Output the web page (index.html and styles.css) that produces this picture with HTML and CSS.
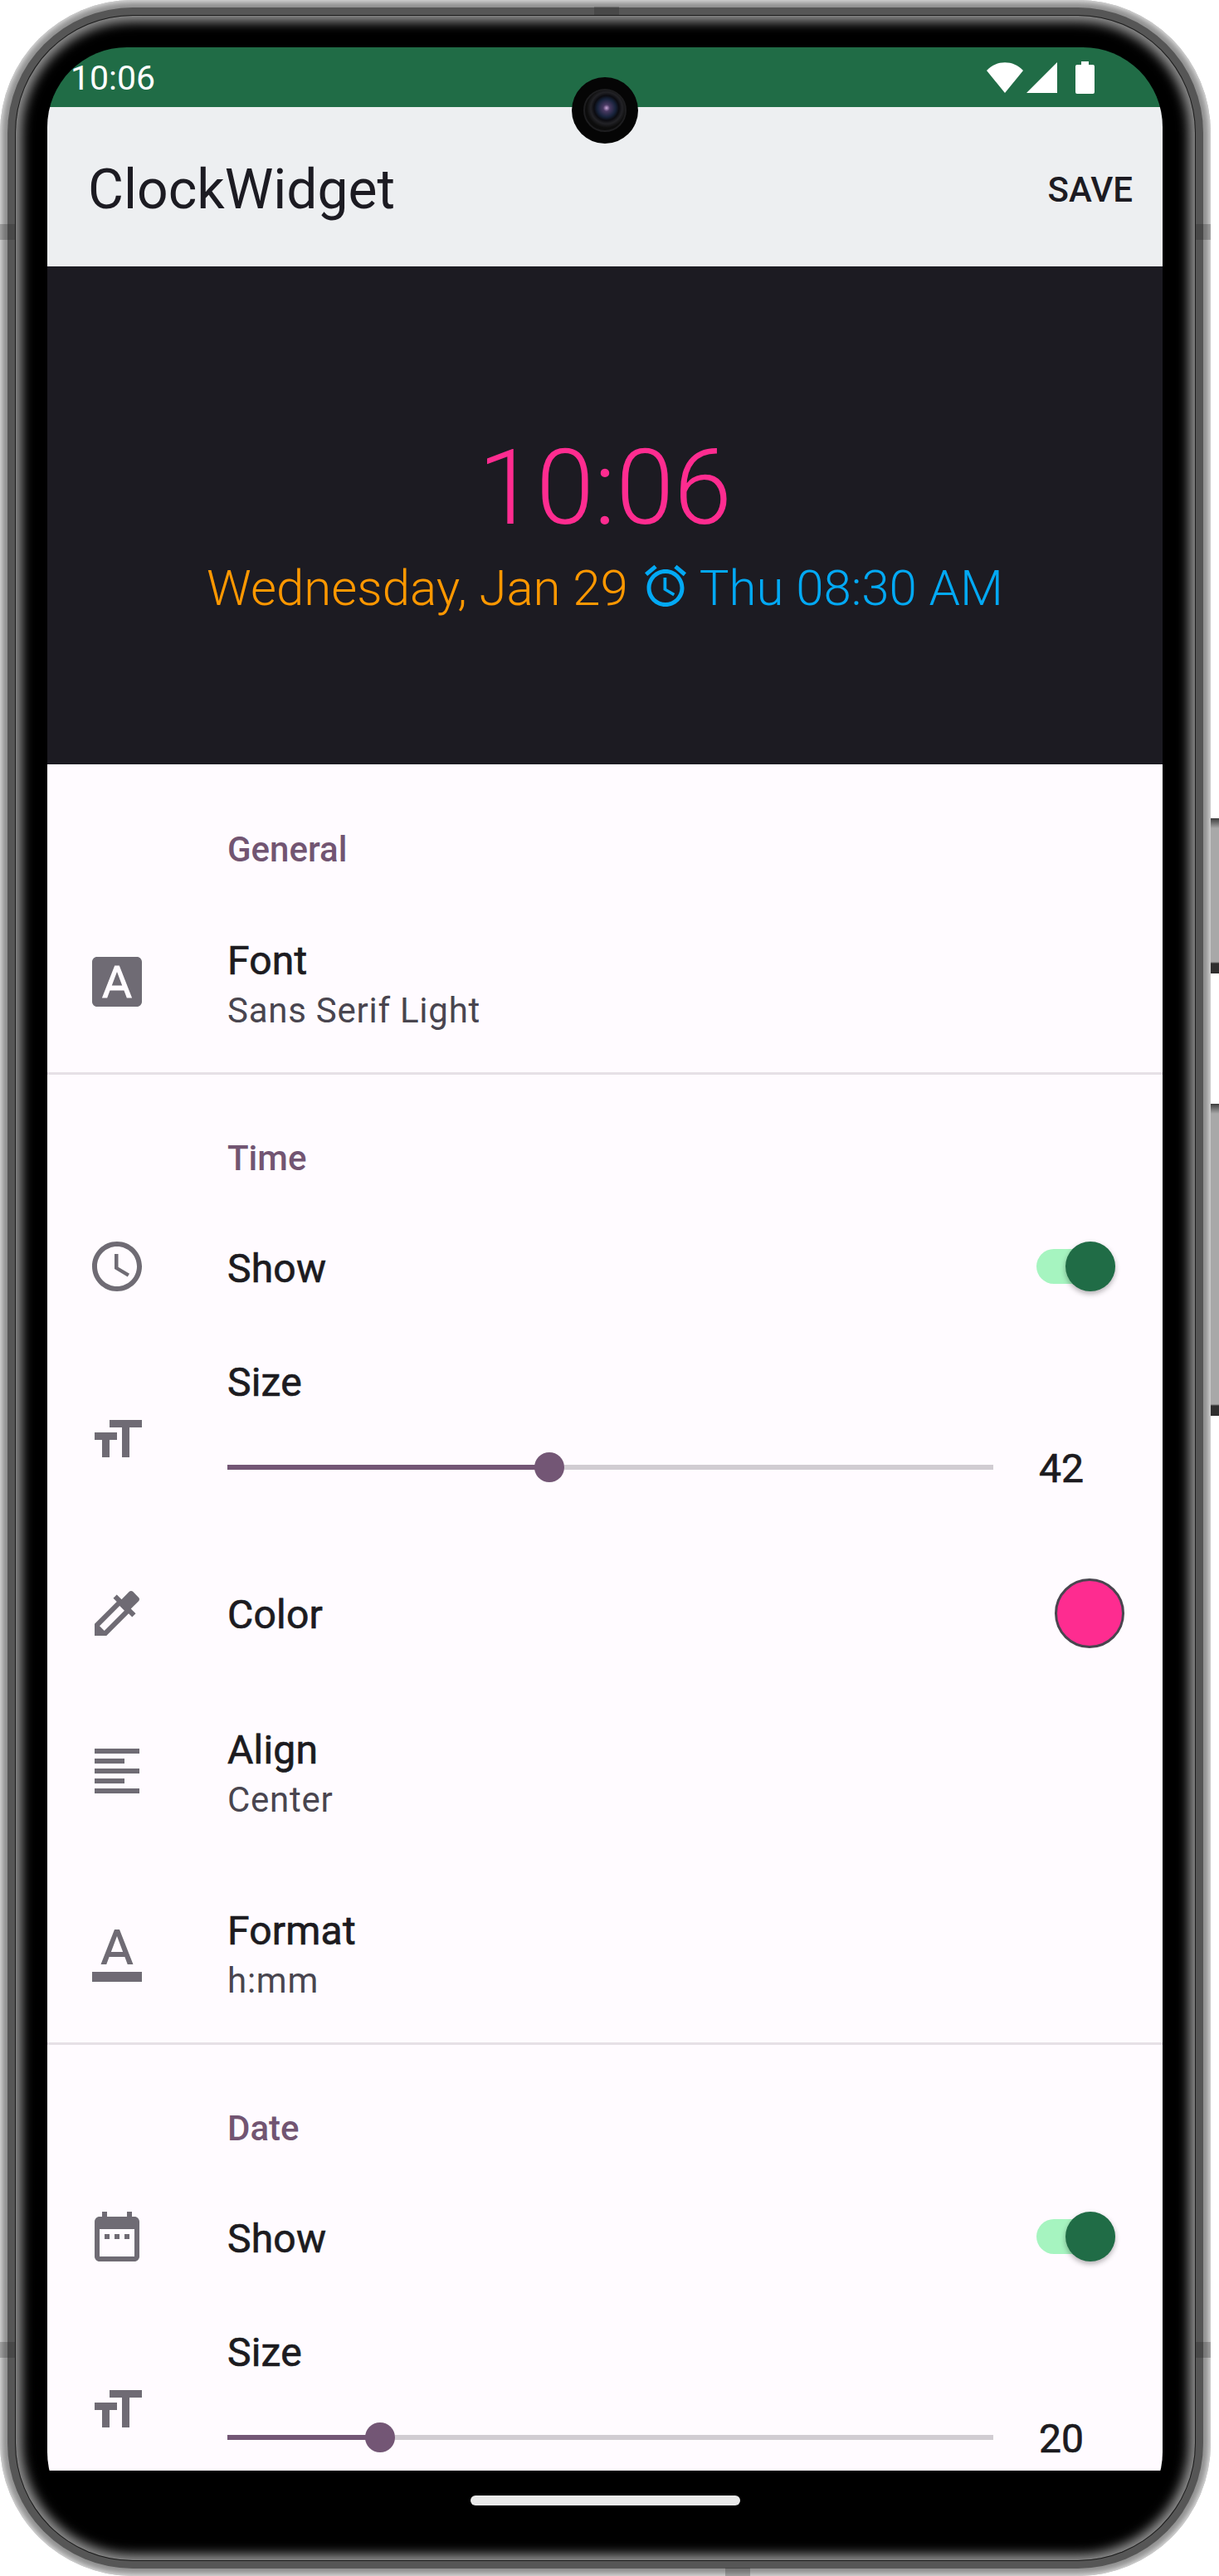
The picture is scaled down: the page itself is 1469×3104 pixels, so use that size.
FILE: index.html
```html
<!DOCTYPE html>
<html lang="en">
<head>
  <meta charset="UTF-8" />
  <title>ClockWidget</title>
  <link rel="stylesheet" href="styles.css">
</head>
<body>
  <div class="device">
    <div class="side-btn side-btn-top"></div>
    <div class="side-btn side-btn-bottom"></div>
    <div class="mark mark-lt"></div>
    <div class="mark mark-lb"></div>
    <div class="mark mark-rt"></div>
    <div class="mark mark-rb"></div>
    <div class="mark mark-top"></div>
    <div class="mark mark-bottom"></div>

    <div class="frame">
      <div class="frame-mid">
        <div class="frame-line">
          <div class="bezel">
            <div class="screen">
              <div class="camera"><div class="lens"></div></div>

              <div class="status-bar">
                <div class="status-time">10:06</div>
                <div class="status-icons">
                  <svg class="icon-wifi" viewBox="0 0 44 37"><path d="M0 10C12-3 32-3 44 10L22 37Z"/></svg>
                  <svg class="icon-signal" viewBox="0 0 37 37"><path d="M37 0V37H0Z"/></svg>
                  <svg class="icon-battery" viewBox="0 0 23 39"><path d="M7 0h9v4h5a2 2 0 0 1 2 2v31a2 2 0 0 1-2 2H2a2 2 0 0 1-2-2V6a2 2 0 0 1 2-2h5Z"/></svg>
                </div>
              </div>

              <div class="app-bar">
                <div class="app-title">ClockWidget</div>
                <div class="app-action">SAVE</div>
              </div>

              <div class="preview">
                <div class="preview-time">10:06</div>
                <div class="preview-line">
                  <span class="preview-date">Wednesday, Jan 29</span>
                  <svg class="preview-alarm" viewBox="0 0 24 24"><path d="M22 5.72l-4.6-3.86-1.29 1.53 4.6 3.86L22 5.72zM7.88 3.39L6.6 1.86 2 5.71l1.29 1.53 4.59-3.85zM12.5 8H11v6l4.75 2.85.75-1.23-4-2.37V8zM12 4c-4.97 0-9 4.03-9 9s4.03 9 9 9 9-4.03 9-9-4.03-9-9-9zm0 16c-3.87 0-7-3.13-7-7s3.13-7 7-7 7 3.13 7 7-3.13 7-7 7z"/></svg>
                  <span class="preview-next">Thu 08:30 AM</span>
                </div>
              </div>

              <div class="settings">
                <section class="group group-first">
                  <div class="group-title">General</div>
                  <div class="row row-two">
                    <svg class="row-icon" viewBox="0 0 24 24"><path d="M9.93 13.5h4.14L12 7.98zM20 2H4c-1.1 0-2 .9-2 2v16c0 1.1.9 2 2 2h16c1.1 0 2-.9 2-2V4c0-1.1-.9-2-2-2zm-4.05 16.5l-1.14-3H9.17l-1.12 3H5.96l5.11-13h1.86l5.11 13h-2.09z"/></svg>
                    <div class="row-text">
                      <div class="row-label">Font</div>
                      <div class="row-sub">Sans Serif Light</div>
                    </div>
                  </div>
                </section>

                <section class="group">
                  <div class="group-title">Time</div>
                  <div class="row row-show">
                    <svg class="row-icon" viewBox="0 0 24 24"><path d="M11.99 2C6.47 2 2 6.48 2 12s4.47 10 9.99 10C17.52 22 22 17.52 22 12S17.52 2 11.99 2zM12 20c-4.42 0-8-3.58-8-8s3.58-8 8-8 8 3.58 8 8-3.58 8-8 8zm.5-13H11v6l5.25 3.15.75-1.23-4.5-2.67z"/></svg>
                    <div class="row-label row-grow">Show</div>
                    <div class="switch"><div class="switch-thumb"></div></div>
                  </div>
                  <div class="row row-size">
                    <svg class="row-icon" viewBox="0 0 24 24"><path d="M9 4v3h5v12h3V7h5V4H9zm-6 8h3v7h3v-7h3V9H3v3z"/></svg>
                    <div class="size-body">
                      <div class="row-label">Size</div>
                      <div class="slider-row">
                        <div class="slider">
                          <div class="slider-fill" style="width: 388px"></div>
                          <div class="slider-thumb"></div>
                          <div class="slider-rest"></div>
                        </div>
                        <div class="slider-value">42</div>
                      </div>
                    </div>
                  </div>
                  <div class="row row-color">
                    <svg class="row-icon" viewBox="0 0 24 24"><path d="M20.71 5.63l-2.34-2.34c-.39-.39-1.02-.39-1.41 0l-3.12 3.12-1.93-1.91-1.41 1.41 1.42 1.42L3 16.25V21h4.75l8.92-8.92 1.42 1.42 1.41-1.41-1.92-1.92 3.12-3.12c.4-.4.4-1.03.01-1.42zM6.92 19L5 17.08l8.06-8.06 1.92 1.92L6.92 19z"/></svg>
                    <div class="row-label row-grow">Color</div>
                    <div class="swatch"></div>
                  </div>
                  <div class="row row-two">
                    <svg class="row-icon" viewBox="0 0 24 24"><path d="M15 15H3v2h12v-2zm0-8H3v2h12V7zM3 13h18v-2H3v2zm0 8h18v-2H3v2zM3 3v2h18V3H3z"/></svg>
                    <div class="row-text">
                      <div class="row-label">Align</div>
                      <div class="row-sub">Center</div>
                    </div>
                  </div>
                  <div class="row row-two">
                    <svg class="row-icon" viewBox="0 0 24 24"><path d="M2 20h20v4H2z"/><path d="M11 3L5.5 17h2.25l1.12-3h6.25l1.12 3h2.25L13 3h-2zm-1.38 9L12 5.67 14.38 12H9.62z"/></svg>
                    <div class="row-text">
                      <div class="row-label">Format</div>
                      <div class="row-sub">h:mm</div>
                    </div>
                  </div>
                </section>

                <section class="group">
                  <div class="group-title">Date</div>
                  <div class="row row-show">
                    <svg class="row-icon" viewBox="0 0 24 24"><path d="M9 11H7v2h2v-2zm4 0h-2v2h2v-2zm4 0h-2v2h2v-2zm2-7h-1V2h-2v2H8V2H6v2H5c-1.11 0-1.99.9-1.99 2L3 20c0 1.1.89 2 2 2h14c1.1 0 2-.9 2-2V6c0-1.1-.9-2-2-2zm0 16H5V9h14v11z"/></svg>
                    <div class="row-label row-grow">Show</div>
                    <div class="switch"><div class="switch-thumb"></div></div>
                  </div>
                  <div class="row row-size">
                    <svg class="row-icon" viewBox="0 0 24 24"><path d="M9 4v3h5v12h3V7h5V4H9zm-6 8h3v7h3v-7h3V9H3v3z"/></svg>
                    <div class="size-body">
                      <div class="row-label">Size</div>
                      <div class="slider-row">
                        <div class="slider">
                          <div class="slider-fill" style="width: 184px"></div>
                          <div class="slider-thumb"></div>
                          <div class="slider-rest"></div>
                        </div>
                        <div class="slider-value">20</div>
                      </div>
                    </div>
                  </div>
                </section>
              </div>

              <div class="nav-bar"><div class="nav-handle"></div></div>
            </div>
          </div>
        </div>
      </div>
    </div>
  </div>
</body>
</html>
```

FILE: styles.css
```css
* {
  box-sizing: border-box;
}

body {
  margin: 0;
  background-color: #fff;
  font-family: Roboto, "Liberation Sans", sans-serif;
  overflow: hidden;
}

/* device frame */
.device {
  position: relative;
  width: 1469px;
  height: 3104px;
}

.frame {
  width: 1459px;
  height: 3104px;
  padding: 9px;
  border-radius: 160px;
  background-color: #8f8f8f;
  box-shadow: inset 0 0 7px 2px #e8e8e8;
}

.frame-mid {
  height: 100%;
  padding: 9px;
  border-radius: 151px;
  background-color: #565656;
}

.frame-line {
  height: 100%;
  padding: 1px;
  border-radius: 142px;
  background-color: #1c1c1c;
}

.bezel {
  height: 100%;
  padding: 38px 39px 34px 38px;
  border-radius: 141px;
  background-color: #000;
  box-shadow: inset 0 0 14px 7px #969696;
}

.side-btn {
  position: absolute;
  left: 1459px;
  width: 10px;
  background: linear-gradient(#3c3c3c 0, #a8a8a8 12px, #a8a8a8 calc(100% - 14px), #2f2f2f calc(100% - 12px), #2f2f2f 100%);
}

.side-btn-top {
  top: 986px;
  height: 187px;
}

.side-btn-bottom {
  top: 1330px;
  height: 376px;
}

.mark {
  position: absolute;
  background-color: rgba(30, 30, 30, 0.25);
}

.mark-lt, .mark-lb, .mark-rt, .mark-rb {
  width: 19px;
  height: 19px;
}

.mark-lt { left: 0; top: 270px; }
.mark-lb { left: 0; top: 2822px; }
.mark-rt { left: 1440px; top: 270px; }
.mark-rb { left: 1440px; top: 2822px; }

.mark-top, .mark-bottom {
  width: 30px;
  height: 10px;
}

.mark-top { left: 716px; top: 8px; }
.mark-bottom { left: 874px; top: 3094px; }

/* screen */
.screen {
  position: relative;
  height: 100%;
  border-radius: 96px;
  overflow: hidden;
  background-color: #000;
}

.camera {
  position: absolute;
  left: 632px;
  top: 36px;
  width: 80px;
  height: 80px;
  padding: 14px;
  border-radius: 50%;
  background-color: #050505;
  z-index: 2;
}

.lens {
  width: 52px;
  height: 52px;
  border-radius: 50%;
  border: 2px solid #1d1d1f;
  background: radial-gradient(circle at 54% 44%, #c9a6d8 0, #4a3a63 4px, #16223a 11px, #0b0b10 15px, #222226 19px, #0c0c0c 24px);
}

.status-bar {
  display: flex;
  justify-content: space-between;
  align-items: center;
  height: 72px;
  padding: 0 82px 0 28px;
  background-color: #206c46;
}

.status-time {
  padding-top: 2px;
  color: #fff;
  font-size: 41px;
  line-height: 50px;
}

.status-icons {
  display: flex;
  align-items: center;
  fill: #fff;
}

.icon-wifi {
  width: 44px;
  height: 37px;
}

.icon-signal {
  width: 37px;
  height: 37px;
  margin-left: 4px;
}

.icon-battery {
  width: 23px;
  height: 39px;
  margin-left: 22px;
}

.app-bar {
  display: flex;
  justify-content: space-between;
  align-items: center;
  height: 192px;
  padding: 8px 36px 0 49px;
  background-color: #edeff1;
  color: #1c1b22;
}

.app-title {
  font-size: 66px;
  line-height: 80px;
}

.app-action {
  font-size: 42px;
  font-weight: 500;
  line-height: 50px;
}

.preview {
  height: 600px;
  padding-top: 193px;
  background-color: #1c1b22;
  text-align: center;
}

.preview-time {
  color: #fe2c90;
  font-size: 126px;
  font-weight: 300;
  line-height: 148px;
}

.preview-line {
  display: flex;
  justify-content: center;
  align-items: center;
  height: 90px;
  padding-top: 3px;
  font-size: 60px;
  font-weight: 300;
}

.preview-date {
  color: #ff9800;
}

.preview-next {
  color: #03a9f4;
}

.preview-alarm {
  width: 60px;
  height: 60px;
  margin: -6px 11px 0 15px;
  fill: #03a9f4;
}

/* settings list */
.settings {
  height: 2056px;
  overflow: hidden;
  background-color: #fffbff;
}

.group {
  border-bottom: 3px solid #e6e0e6;
}

.group-title {
  height: 136px;
  padding: 65px 0 0 217px;
  color: #725572;
  font-size: 42px;
  font-weight: 500;
  line-height: 72px;
}

.group-first .group-title {
  height: 156px;
  padding-top: 67px;
}

.row {
  display: flex;
  align-items: center;
}

.row-icon {
  flex: none;
  width: 72px;
  height: 72px;
  margin: -10px 97px 0 48px;
  fill: #6f6b74;
}

.row-two {
  padding: 51px 0 47px;
}

.row-two:last-child {
  padding-bottom: 44px;
}

.row-text {
  flex: 1;
}

.row-label {
  color: #1c1b1f;
  font-size: 48px;
  letter-spacing: 0.2px;
  -webkit-text-stroke: 0.7px #1c1b1f;
  line-height: 60px;
}

.row-grow {
  flex: 1;
  padding-top: 4px;
}

.row-sub {
  color: #49454f;
  font-size: 42px;
  letter-spacing: 0.75px;
  line-height: 60px;
}

.row-show {
  height: 192px;
}

.row-show .row-icon {
  margin-top: -2px;
}

.row-color {
  height: 168px;
}

.row-color .row-icon {
  margin-top: 0;
}

.switch {
  position: relative;
  width: 95px;
  height: 42px;
  margin: -2px 57px 0 0;
  border-radius: 21px;
  background-color: #a6f4c0;
}

.switch-thumb {
  position: absolute;
  top: -9px;
  right: 0;
  width: 60px;
  height: 60px;
  border-radius: 50%;
  background-color: #206c46;
  box-shadow: 0 3px 6px rgba(0, 0, 0, 0.3);
}

.swatch {
  width: 84px;
  height: 84px;
  margin-right: 46px;
  border: 3px solid #49454f;
  border-radius: 50%;
  background-color: #fe2c90;
}

.row-size {
  height: 237px;
}

.row-size .row-icon {
  margin-top: -14px;
}

.size-body {
  flex: 1;
  align-self: flex-start;
  padding-top: 13px;
}

.slider-row {
  display: flex;
  align-items: center;
  height: 36px;
  margin-top: 54px;
}

.slider {
  display: flex;
  align-items: center;
  flex: none;
  width: 923px;
  height: 36px;
}

.slider-fill {
  flex: none;
  height: 6px;
  background-color: #735675;
}

.slider-thumb {
  flex: none;
  position: relative;
  width: 36px;
  height: 36px;
  margin: 0 -18px;
  border-radius: 50%;
  background-color: #735675;
}

.slider-rest {
  flex: 1;
  height: 6px;
  background-color: #d1ccd2;
}

.slider-value {
  margin: 4px 0 0 55px;
  color: #1c1b1f;
  font-size: 48px;
  -webkit-text-stroke: 0.7px #1c1b1f;
  line-height: 60px;
}

.nav-bar {
  display: flex;
  justify-content: center;
  height: 72px;
  padding-top: 30px;
  background-color: #000;
}

.nav-handle {
  width: 325px;
  height: 12px;
  border-radius: 6px;
  background-color: #e9e9e9;
}
```
